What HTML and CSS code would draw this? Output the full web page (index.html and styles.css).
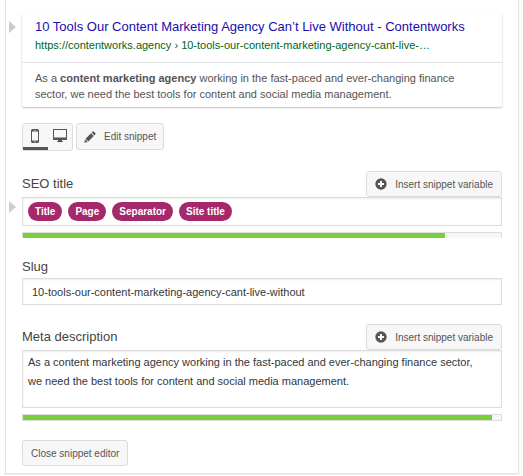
FILE: index.html
```
<!DOCTYPE html>
<html lang="en">
<head>
    <meta charset="UTF-8">
    <meta name="viewport" content="width=device-width, initial-scale=1.0">
    <title>Snippet editor</title>
    <link rel="stylesheet" href="styles.css">
</head>
<body>
    <main class="editor">
        <section class="row">
            <span class="marker marker-preview"></span>
            <div class="preview">
                <div class="preview-head">
                    <a class="preview-title" href="#">10 Tools Our Content Marketing Agency Can’t Live Without - Contentworks</a>
                    <div class="preview-url">https://contentworks.agency › 10-tools-our-content-marketing-agency-cant-live-…</div>
                </div>
                <p class="preview-desc">As a <strong>content marketing agency</strong> working in the fast-paced and ever-changing finance sector, we need the best tools for content and social media management.</p>
            </div>
        </section>

        <div class="row toolbar-row">
            <div class="toolbar">
                <div class="switcher">
                    <button type="button" class="view active" aria-label="Mobile preview">
                        <svg width="8" height="14" viewBox="0 0 8 14"><path fill="#555" fill-rule="evenodd" d="M1.500 0h5Q8 0 8 1.500v11Q8 14 6.500 14h-5Q0 14 0 12.500v-11Q0 0 1.500 0zM1 2.500v9h6v-9zM3 1v.600h2V1zM3.300 12.200v1h1.400v-1z"/></svg>
                    </button>
                    <button type="button" class="view" aria-label="Desktop preview">
                        <svg width="14" height="14" viewBox="0 0 14 14"><path fill="#555" fill-rule="evenodd" d="M.500 0h13l.500.500v10l-.500.500H9v1l1 .500v.500H4v-.500L5 12v-1H.500l-.500-.500V.500zM1 1v7.500h12V1z"/></svg>
                    </button>
                </div>
                <button type="button" class="btn btn-edit">
                    <svg width="12" height="12" viewBox="0 0 12 12"><path fill="#555" d="M8.500.700q.700-.700 1.400 0l1.400 1.400q.700.700 0 1.400l-.900.900-2.800-2.800zM7 2.200 9.800 5 4.300 10.500 1.500 7.700zM1 8.300 3.700 11 .300 11.700z"/></svg>
                    Edit snippet
                </button>
            </div>
        </div>

        <div class="row">
            <span class="marker marker-field"></span>
            <div class="field">
                <div class="field-head">
                    <span class="label" id="seo-title">SEO title</span>
                    <button type="button" class="btn">
                        <svg width="12" height="12" viewBox="0 0 12 12"><circle cx="6" cy="6" r="5.700" fill="#555"/><path fill="#f7f7f7" d="M5 3h2v2h2v2H7v2H5V7H3V5h2z"/></svg>
                        Insert snippet variable
                    </button>
                </div>
                <div class="box tags" role="textbox" contenteditable="true" spellcheck="false" aria-labelledby="seo-title"><span class="tag">Title</span><span class="tag">Page</span><span class="tag">Separator</span><span class="tag">Site title</span></div>
                <progress class="bar bar-open" max="478" value="422" aria-label="SEO title width"></progress>
            </div>
        </div>

        <div class="row">
            <div class="field">
                <label class="label label-slug" for="slug">Slug</label>
                <input class="box slug" id="slug" type="text" spellcheck="false" value="10-tools-our-content-marketing-agency-cant-live-without">
            </div>
        </div>

        <div class="row">
            <div class="field">
                <div class="field-head field-head-meta">
                    <label class="label" for="meta">Meta description</label>
                    <button type="button" class="btn">
                        <svg width="12" height="12" viewBox="0 0 12 12"><circle cx="6" cy="6" r="5.700" fill="#555"/><path fill="#f7f7f7" d="M5 3h2v2h2v2H7v2H5V7H3V5h2z"/></svg>
                        Insert snippet variable
                    </button>
                </div>
                <textarea class="box meta" id="meta" spellcheck="false">As a content marketing agency working in the fast-paced and ever-changing finance sector, we need the best tools for content and social media management.</textarea>
                <progress class="bar" max="478" value="469" aria-label="Meta description length"></progress>
            </div>
        </div>

        <div class="row">
            <div class="field">
                <button type="button" class="btn btn-close">Close snippet editor</button>
            </div>
        </div>
    </main>
</body>
</html>
```
FILE: styles.css
```
* {
    box-sizing: border-box;
}
body {
    margin: 0;
    padding: 0 4px 1px 5px;
    background: #fdfdfd;
    font-family: "Liberation Sans", Arial, sans-serif;
    font-size: 11px;
    color: #444;
}
.editor {
    padding: 13px 16px 7px 0;
    background: #fff;
    border: 1px solid #e2e2e2;
    border-top: 0;
    box-shadow: 0 1px 1px rgba(0, 0, 0, 0.05);
}
.row {
    display: grid;
    grid-template-columns: 16px minmax(0, 1fr);
}
.row > :last-child {
    grid-column: 2;
}
.marker {
    width: 0;
    height: 0;
    margin-left: 3px;
    border: solid transparent;
    border-width: 6px 0 6px 7px;
    border-left-color: #ccc;
}
.marker-preview {
    margin-top: 8px;
}
.marker-field {
    margin-top: 30px;
}

/* search result preview */
.preview {
    border-radius: 2px;
    box-shadow: 0 1px 2px rgba(0, 0, 0, 0.25);
}
.preview-head {
    padding: 4px 13px 9px;
    border-bottom: 1px solid #dfe1e5;
}
.preview-title {
    display: block;
    font-size: 13px;
    line-height: 20px;
    color: #1a0dab;
    text-decoration: none;
    white-space: nowrap;
}
.preview-url {
    line-height: 16px;
    color: #006621;
    white-space: nowrap;
}
.preview-desc {
    margin: 0;
    padding: 7px 13px 5px;
    line-height: 16px;
    color: #545454;
}

/* buttons */
.toolbar-row {
    padding: 16px 0 20px;
}
.toolbar {
    display: flex;
    gap: 3px;
}
.switcher {
    display: flex;
    width: 51px;
    height: 28px;
    background: #f7f7f7;
    border: 1px solid #dbdbdb;
    border-radius: 3px;
}
.view {
    display: flex;
    flex: 1;
    justify-content: center;
    padding: 5px 0 0;
    background: none;
    border: 0;
    border-bottom: 3px solid transparent;
}
.view.active {
    border-bottom-color: #555;
}
.btn {
    display: flex;
    align-items: center;
    gap: 8px;
    height: 26px;
    padding: 0 8px;
    font-family: inherit;
    font-size: 10px;
    color: #555;
    white-space: nowrap;
    background: #f7f7f7;
    border: 1px solid #dbdbdb;
    border-radius: 3px;
}
.btn-edit {
    height: 27px;
    padding: 0 7px;
}
.btn-close {
    margin-top: 19px;
}

/* fields */
.field-head {
    display: flex;
    align-items: center;
    justify-content: space-between;
}
.field-head-meta {
    margin-top: 19px;
}
.label {
    font-size: 13px;
    line-height: 16px;
}
.label-slug {
    display: block;
    margin: 21px 0 3px;
}
.box {
    display: block;
    width: 100%;
    margin: 0;
    font-family: inherit;
    font-size: 11px;
    color: #32373c;
    background: #fff;
    border: 1px solid #ddd;
    border-radius: 0;
    box-shadow: inset 0 1px 2px rgba(0, 0, 0, 0.07);
    outline: 0;
}
.tags {
    display: flex;
    gap: 6px;
    padding: 4px 5px;
}
.tag {
    padding: 0 7px;
    font-size: 10px;
    font-weight: bold;
    line-height: 19px;
    color: #fff;
    background: #a4286a;
    border-radius: 10px;
}
.slug {
    height: 27px;
    padding: 0 9px;
}
.meta {
    height: 58px;
    padding: 2px 20px 2px 5px;
    line-height: 19px;
    resize: none;
    overflow: hidden;
}
.bar {
    display: block;
    width: 100%;
    height: 7px;
    margin-top: 6px;
    appearance: none;
    background: #f7f7f7;
    border: 1px solid #ddd;
}
.bar-open {
    height: 6px;
    border-bottom: 0;
}
.bar::-webkit-progress-bar {
    background: #f7f7f7;
}
.bar::-webkit-progress-value {
    background: #7ad03a;
}
```
